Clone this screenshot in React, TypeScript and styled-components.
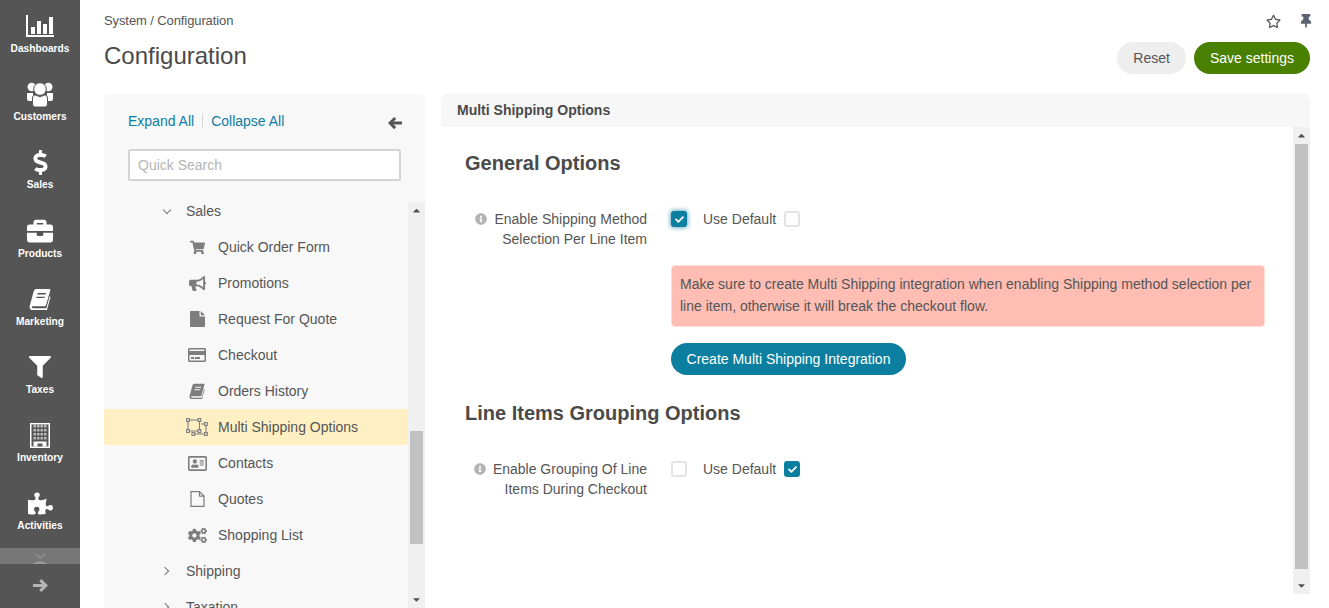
import { ReactNode } from 'react'
import styled, { createGlobalStyle } from 'styled-components'
import {
  FaBriefcase,
  FaBullhorn,
  FaCaretDown,
  FaCaretUp,
  FaCheck,
  FaCircle,
  FaCogs,
  FaDollarSign,
  FaFilter,
  FaInfoCircle,
  FaPuzzlePiece,
  FaRegAddressCard,
  FaRegCreditCard,
  FaRegStar,
  FaShoppingCart,
  FaThumbtack,
} from 'react-icons/fa'

const SIDE_BG = '#555556'

const BookIcon = ({ size }: { size: number }) => (
  <svg width={size} height={size} viewBox="0 0 24 24" fill="currentColor">
    <path
      fillRule="evenodd"
      d="M8 1h14c1 0 1.500.8 1.200 1.800l-4.500 15.500c-.4 1.200-1 1.700-2.200 1.700H4.500c-.9 0-1.500.4-1.500 1s.6 1 1.500 1h14.500l3.500-13 1 .8-3.800 14c-.2.7-.7 1.200-1.400 1.200H4C1.800 24 .5 22.300.7 20L5 4c.4-1.700 1.500-3 3-3zM9.500 5.500l-.4 1.500h9l.4-1.500zM8.300 9.500l-.4 1.500h9l.4-1.500z"
    />
  </svg>
)

const ChartIcon = () => (
  <svg width="28" height="22" viewBox="0 0 28 22" fill="currentColor">
    <path d="M0 0h2v20h26v2H0z" />
    <path d="M5 12h4v7H5zM11 6h4v13h-4zM17 9h4v10h-4zM23 2h4v17h-4z" />
  </svg>
)

const UsersIcon = () => (
  <svg width="26" height="25" viewBox="0 0 26 25" fill="currentColor">
    <circle cx="4.700" cy="5" r="4.200" />
    <circle cx="21.300" cy="5" r="4.200" />
    <path d="M.5 11h5.500v8H2a2 2 0 0 1-2-2v-4.500c0-.8.200-1.500.5-1.500zM25.500 11H20v8h4a2 2 0 0 0 2-2v-4.500c0-.8-.2-1.500-.5-1.500z" />
    <circle cx="13" cy="7" r="6.300" stroke={SIDE_BG} />
    <path
      d="M5.500 16c0-1.800 1.500-3 3-3l4.500 1.800 4.500-1.800c1.500 0 3 1.200 3 3v6c0 1.700-1.300 3-3 3h-9c-1.700 0-3-1.300-3-3z"
      stroke={SIDE_BG}
    />
  </svg>
)

const windowRects = [2, 6, 10, 14].flatMap((y) => [3.5, 7, 10.5, 14].map((x) => ({ x, y })))

const BuildingIcon = () => (
  <svg width="20" height="25" viewBox="0 0 20 25">
    <path fill="currentColor" fillRule="evenodd" d="M0 0h20v25H0zM1.500 1.500v22h17v-22z" />
    {windowRects.map((w) => (
      <rect key={`${w.x}-${w.y}`} x={w.x} y={w.y} width="2.500" height="2.500" fill="#b9b9b9" />
    ))}
    <path fill="currentColor" d="M3.500 18.500h13v5h-4v-3h-5v3h-4z" />
  </svg>
)

const ArrowIcon = ({ flip, size }: { flip?: boolean; size: number }) => (
  <svg width={size} height={size} viewBox="0 0 16 16" fill="currentColor">
    <path
      transform={flip ? 'translate(16 0) scale(-1 1)' : undefined}
      d="M0 8l7-7 2.400 2.400L6.300 6.300H16v3.400H6.300l3.100 2.900L7 15z"
    />
  </svg>
)

const FileIcon = () => (
  <svg width="15" height="16" viewBox="0 0 15 16" fill="currentColor">
    <path d="M1 0h8.500v5.500H15V15a1 1 0 0 1-1 1H1a1 1 0 0 1-1-1V1a1 1 0 0 1 1-1zM10.800 0L15 4.200h-4.200z" />
  </svg>
)

const FileOutlineIcon = () => (
  <svg width="15" height="16" viewBox="0 0 15 16" fill="none" stroke="currentColor" strokeWidth="1.200">
    <path d="M1 .6h8.500l4.500 4.500v10.300H1zM9.500.6v4.500H14" />
  </svg>
)

const UngroupIcon = () => (
  <svg width="22" height="18" viewBox="0 0 22 18" fill="none" stroke="currentColor" strokeWidth="1.100">
    <path d="M3 2h9.500M2 3v9M13.500 3v9M3 13h9.500" />
    <rect x=".6" y=".6" width="2.800" height="2.800" />
    <rect x="12" y=".6" width="2.800" height="2.800" />
    <rect x=".6" y="11.600" width="2.800" height="2.800" />
    <rect x="12" y="11.600" width="2.800" height="2.800" />
    <path d="M15 6h3.500M20 7.500v7M8.500 16h10" />
    <rect x="18.500" y="4.600" width="2.800" height="2.800" />
    <rect x="18.500" y="14.600" width="2.800" height="2.800" />
    <rect x="6" y="14.600" width="2.800" height="2.800" />
  </svg>
)

const GlobalStyle = createGlobalStyle`
  html, body {
    margin: 0;
    height: 100%;
    overflow: hidden;
    background: #fff;
  }
  body {
    font-family: "Liberation Sans", Arial, sans-serif;
    font-size: 14px;
    color: #4a4a4a;
  }
`

const menuItems: { label: string; icon: ReactNode }[] = [
  { label: 'Dashboards', icon: <ChartIcon /> },
  { label: 'Customers', icon: <UsersIcon /> },
  { label: 'Sales', icon: <FaDollarSign size={25} /> },
  { label: 'Products', icon: <FaBriefcase size={26} /> },
  { label: 'Marketing', icon: <BookIcon size={22} /> },
  { label: 'Taxes', icon: <FaFilter size={22} /> },
  { label: 'Inventory', icon: <BuildingIcon /> },
  { label: 'Activities', icon: <FaPuzzlePiece size={25} /> },
]

const salesChildren: { label: string; icon: ReactNode; active?: boolean }[] = [
  { label: 'Quick Order Form', icon: <FaShoppingCart size={15} /> },
  { label: 'Promotions', icon: <FaBullhorn size={17} /> },
  { label: 'Request For Quote', icon: <FileIcon /> },
  { label: 'Checkout', icon: <FaRegCreditCard size={18} /> },
  { label: 'Orders History', icon: <BookIcon size={16} /> },
  { label: 'Multi Shipping Options', icon: <UngroupIcon />, active: true },
  { label: 'Contacts', icon: <FaRegAddressCard size={19} /> },
  { label: 'Quotes', icon: <FileOutlineIcon /> },
  { label: 'Shopping List', icon: <FaCogs size={19} /> },
]

function Scrollbar({ offset, thumb }: { offset: number; thumb: number }) {
  return (
    <Track>
      <TrackArrow>
        <FaCaretUp size={11} />
      </TrackArrow>
      <Thumb $offset={offset} $height={thumb} />
      <TrackFill />
      <TrackArrow>
        <FaCaretDown size={11} />
      </TrackArrow>
    </Track>
  )
}

function Checkbox({ checked, focused }: { checked?: boolean; focused?: boolean }) {
  return (
    <CheckBox $checked={checked} $focused={focused}>
      {checked && <FaCheck size={9} />}
    </CheckBox>
  )
}

export default function App() {
  return (
    <Page>
      <GlobalStyle />
      <SideBar>
        <SideMenu>
          {menuItems.map((item) => (
            <SideItem key={item.label}>
              <SideIcon>{item.icon}</SideIcon>
              <SideLabel>{item.label}</SideLabel>
            </SideItem>
          ))}
          <SideItem>
            <SideIcon>
              <FaCircle size={22} />
            </SideIcon>
          </SideItem>
          <MoreBand>
            <svg width="11" height="6" viewBox="0 0 11 6" fill="none" stroke="currentColor" strokeWidth="1.500">
              <path d="M.5.5l5 4.500 5-4.500" />
            </svg>
          </MoreBand>
        </SideMenu>
        <SideFooter>
          <ArrowIcon flip size={15} />
        </SideFooter>
      </SideBar>

      <Main>
        <Header>
          <HeaderTop>
            <Breadcrumb>System / Configuration</Breadcrumb>
            <HeaderIcons>
              <StarIcon>
                <FaRegStar size={15} />
              </StarIcon>
              <PinIcon>
                <FaThumbtack size={14} />
              </PinIcon>
            </HeaderIcons>
          </HeaderTop>
          <HeaderBottom>
            <Title>Configuration</Title>
            <Actions>
              <ResetButton>Reset</ResetButton>
              <SaveButton>Save settings</SaveButton>
            </Actions>
          </HeaderBottom>
        </Header>

        <Panels>
          <TreePanel>
            <TreeTools>
              <TreeLinks>
                <TreeLink>Expand All</TreeLink>
                <TreeLinkDivider />
                <TreeLink>Collapse All</TreeLink>
              </TreeLinks>
              <CollapseIcon>
                <ArrowIcon size={14} />
              </CollapseIcon>
            </TreeTools>
            <SearchInput placeholder="Quick Search" readOnly />
            <TreeBody>
              <TreeScroll>
                <TreeList>
                  <TopRow>
                    <ChevronDown />
                    Sales
                  </TopRow>
                  {salesChildren.map((child) => (
                    <ChildRow key={child.label} $active={child.active}>
                      <ChildIcon>{child.icon}</ChildIcon>
                      {child.label}
                    </ChildRow>
                  ))}
                  <TopRow>
                    <ChevronRight />
                    Shipping
                  </TopRow>
                  <TopRow>
                    <ChevronRight />
                    Taxation
                  </TopRow>
                </TreeList>
              </TreeScroll>
              <Scrollbar offset={212} thumb={113} />
            </TreeBody>
          </TreePanel>

          <ContentPanel>
            <ContentHeader>Multi Shipping Options</ContentHeader>
            <ContentBody>
              <Form>
                <SectionTitle>General Options</SectionTitle>
                <FieldRow>
                  <FieldLabel>
                    <InfoIcon>
                      <FaInfoCircle size={12} />
                    </InfoIcon>
                    Enable Shipping Method
                    <br />
                    Selection Per Line Item
                  </FieldLabel>
                  <Checkbox checked focused />
                  <UseDefault>Use Default</UseDefault>
                  <Checkbox />
                </FieldRow>
                <Alert>
                  Make sure to create Multi Shipping integration when enabling Shipping method
                  selection per line item, otherwise it will break the checkout flow.
                </Alert>
                <PrimaryButton>Create Multi Shipping Integration</PrimaryButton>
                <SectionTitle $second>Line Items Grouping Options</SectionTitle>
                <FieldRow>
                  <FieldLabel>
                    <InfoIcon>
                      <FaInfoCircle size={12} />
                    </InfoIcon>
                    Enable Grouping Of Line
                    <br />
                    Items During Checkout
                  </FieldLabel>
                  <Checkbox />
                  <UseDefault>Use Default</UseDefault>
                  <Checkbox checked />
                </FieldRow>
              </Form>
              <ContentScroll>
                <Scrollbar offset={0} thumb={425} />
              </ContentScroll>
            </ContentBody>
          </ContentPanel>
        </Panels>
      </Main>
    </Page>
  )
}

const Page = styled.div`
  display: flex;
  width: 100%;
  height: 608px;
  overflow: hidden;
`

const SideBar = styled.nav`
  display: flex;
  flex-direction: column;
  flex: 0 0 80px;
  background: ${SIDE_BG};
  color: #fff;
`

const SideMenu = styled.div`
  position: relative;
  height: 564px;
  padding-top: 9px;
  box-sizing: border-box;
  overflow: hidden;
`

const SideItem = styled.div`
  display: flex;
  flex-direction: column;
  align-items: center;
  height: 68.2px;
`

const SideIcon = styled.div`
  display: flex;
  align-items: center;
  justify-content: center;
  height: 28px;
  margin-top: 3px;
`

const SideLabel = styled.div`
  margin-top: 2px;
  font-size: 10.2px;
  font-weight: 700;
  line-height: 13px;
`

const MoreBand = styled.div`
  position: absolute;
  left: 0;
  right: 0;
  bottom: 0;
  height: 16px;
  display: flex;
  justify-content: center;
  align-items: flex-start;
  padding-top: 5px;
  box-sizing: border-box;
  background: rgba(128, 128, 128, 0.8);
  color: #8f8f8f;
`

const SideFooter = styled.div`
  flex: 1;
  display: flex;
  align-items: center;
  justify-content: center;
  padding-bottom: 2px;
  color: #b4b4b4;
`

const Main = styled.main`
  flex: 1;
  min-width: 0;
  padding: 0 19px 0 24px;
`

const Header = styled.header`
  height: 94px;
`

const HeaderTop = styled.div`
  display: flex;
  align-items: center;
  justify-content: space-between;
  height: 24px;
  padding-top: 9px;
`

const Breadcrumb = styled.div`
  font-size: 13px;
  line-height: 14px;
  letter-spacing: -0.1px;
  color: #555;
`

const HeaderIcons = styled.div`
  display: flex;
  align-items: center;
  gap: 18px;
`

const StarIcon = styled.span`
  display: flex;
  color: #555;
`

const PinIcon = styled.span`
  display: flex;
  margin-right: -3px;
  color: #5b6270;
`

const HeaderBottom = styled.div`
  display: flex;
  align-items: flex-start;
  justify-content: space-between;
`

const Title = styled.h1`
  margin: 4px 0 0;
  font-size: 24px;
  font-weight: 400;
  line-height: 38px;
  color: #4a4a4a;
`

const Actions = styled.div`
  display: flex;
  gap: 8px;
  margin-top: 9px;
`

const PillButton = styled.button`
  height: 32px;
  padding: 0 16px;
  border: 0;
  border-radius: 16px;
  font-family: inherit;
  font-size: 14px;
  white-space: nowrap;
`

const ResetButton = styled(PillButton)`
  background: #eeeeee;
  color: #555;
`

const SaveButton = styled(PillButton)`
  background: #4a8000;
  color: #fff;
`

const Panels = styled.div`
  display: flex;
  gap: 16px;
  height: 514px;
`

const TreePanel = styled.section`
  display: flex;
  flex-direction: column;
  flex: 0 0 321px;
  border-radius: 6px 6px 0 0;
  background: #f8f8f8;
`

const TreeTools = styled.div`
  display: flex;
  align-items: flex-start;
  justify-content: space-between;
  height: 55px;
  padding: 19px 23px 0 24px;
  box-sizing: border-box;
`

const TreeLinks = styled.div`
  display: flex;
  align-items: center;
  height: 16px;
`

const TreeLink = styled.a`
  line-height: 16px;
  color: #0c7fa5;
`

const TreeLinkDivider = styled.span`
  width: 1px;
  height: 14px;
  margin: 0 8px;
  background: #d8d8d8;
`

const CollapseIcon = styled.span`
  display: flex;
  margin-top: 3px;
  color: #555;
`

const SearchInput = styled.input`
  width: 273px;
  height: 32px;
  margin-left: 24px;
  padding: 0 8px;
  box-sizing: border-box;
  border: 2px solid #d4d4d4;
  border-radius: 2px;
  background: #fff;
  font-family: inherit;
  font-size: 14px;
  outline: none;

  &::placeholder {
    color: #b5b5b5;
    opacity: 1;
  }
`

const TreeBody = styled.div`
  display: flex;
  height: 406px;
  margin-top: 21px;
`

const TreeScroll = styled.div`
  flex: 1;
  min-width: 0;
  overflow: hidden;
`

const TreeList = styled.div`
  margin-top: -9px;
`

const TopRow = styled.div`
  display: flex;
  align-items: center;
  height: 36px;
  padding-left: 57px;
  color: #555;
`

const ChevronDown = styled.span`
  width: 5px;
  height: 5px;
  margin: -3px 16px 0 3px;
  border-right: 1px solid #777;
  border-bottom: 1px solid #777;
  transform: rotate(45deg);
`

const ChevronRight = styled.span`
  width: 5px;
  height: 5px;
  margin: 0 18px 0 1px;
  border-right: 1px solid #777;
  border-top: 1px solid #777;
  transform: rotate(45deg);
`

const ChildRow = styled.div<{ $active?: boolean }>`
  display: flex;
  align-items: center;
  gap: 10px;
  height: 36px;
  padding-left: 82px;
  background: ${({ $active }) => ($active ? '#fff0c4' : 'transparent')};
  color: #555;
`

const ChildIcon = styled.span`
  display: flex;
  align-items: center;
  justify-content: center;
  width: 22px;
  color: #7d7d7d;
`

const Track = styled.div`
  display: flex;
  flex-direction: column;
  flex: 0 0 17px;
  height: 100%;
  background: #f0f0f0;
`

const TrackArrow = styled.div`
  display: flex;
  align-items: center;
  justify-content: center;
  flex: 0 0 17px;
  color: #505050;
`

const Thumb = styled.div<{ $offset: number; $height: number }>`
  flex: 0 0 ${({ $height }) => $height}px;
  margin: ${({ $offset }) => $offset}px 2px 0;
  background: #c1c1c1;
`

const TrackFill = styled.div`
  flex: 1;
`

const ContentPanel = styled.section`
  display: flex;
  flex-direction: column;
  flex: 1;
  min-width: 0;
`

const ContentHeader = styled.div`
  flex: 0 0 33px;
  padding-left: 16px;
  border-radius: 6px 6px 0 0;
  background: #f7f7f7;
  font-weight: 700;
  line-height: 33px;
  color: #4a4a4a;
`

const ContentBody = styled.div`
  display: flex;
  flex: 1;
  min-height: 0;
`

const Form = styled.div`
  flex: 1;
  min-width: 0;
  padding: 24px 0 0 24px;
`

const ContentScroll = styled.div`
  flex: 0 0 17px;
  height: 467px;
`

const SectionTitle = styled.h2<{ $second?: boolean }>`
  margin: ${({ $second }) => ($second ? '26px' : '0')} 0 34px;
  font-size: 20px;
  font-weight: 700;
  line-height: 24px;
  color: #4a4a4a;
`

const FieldRow = styled.div`
  display: flex;
  align-items: flex-start;
`

const FieldLabel = styled.div`
  flex: 0 0 182px;
  margin-right: 24px;
  text-align: right;
  line-height: 20px;
  color: #555;
`

const InfoIcon = styled.span`
  display: inline-block;
  height: 12px;
  margin-right: 7px;
  line-height: 0;
  vertical-align: -1px;
  color: #b3b3b3;
`

const CheckBox = styled.span<{ $checked?: boolean; $focused?: boolean }>`
  display: flex;
  align-items: center;
  justify-content: center;
  width: 16px;
  height: 16px;
  margin-top: 2px;
  box-sizing: border-box;
  border: ${({ $checked }) => ($checked ? '0' : '2px solid #e3e3e3')};
  border-radius: 3px;
  background: ${({ $checked }) => ($checked ? '#0c7fa0' : '#fff')};
  box-shadow: ${({ $focused }) => ($focused ? '0 0 4px 1px rgba(12, 127, 160, 0.6)' : 'none')};
  color: #fff;
`

const UseDefault = styled.span`
  margin: 0 8px 0 16px;
  line-height: 20px;
  color: #555;
`

const Alert = styled.div`
  width: 594px;
  height: 62px;
  margin: 16px 0 16px 206px;
  padding: 7px 8px;
  box-sizing: border-box;
  border: 1px solid #ffdcd6;
  border-radius: 4px;
  background: #ffbdb3;
  line-height: 22px;
  color: #555;
`

const PrimaryButton = styled(PillButton)`
  display: block;
  width: 235px;
  padding: 0;
  margin-left: 206px;
  background: #0c7fa0;
  color: #fff;
`
